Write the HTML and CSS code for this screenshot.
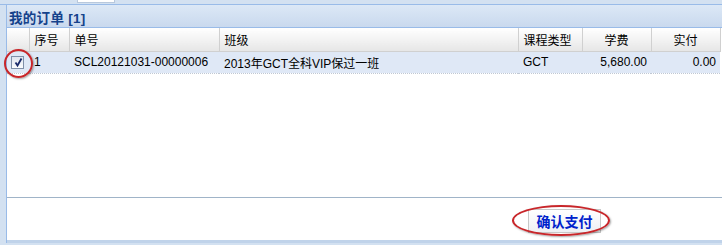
FILE: index.html
```html
<!doctype html>
<html lang="zh">
<head>
<meta charset="utf-8">
<title>我的订单</title>
<link rel="stylesheet" href="styles.css">
</head>
<body>
<div class="top"><span class="tab"></span></div>
<div class="panel">
	<div class="panel-title">我的订单 [1]</div>
	<div class="grid">
		<table class="grid-table">
			<thead>
				<tr>
					<th class="c-check"></th>
					<th class="c-no">序号</th>
					<th class="c-code">单号</th>
					<th class="c-class">班级</th>
					<th class="c-type">课程类型</th>
					<th class="c-fee num-h">学费</th>
					<th class="c-paid num-h">实付</th>
				</tr>
			</thead>
			<tbody>
				<tr class="sel">
					<td class="c-check"><span class="cb"><svg width="11" height="11" viewBox="0 0 11 11"><path d="M2.5 5.5 L4.5 8.5 L8.5 1.5" fill="none" stroke="#1a2a6a" stroke-width="1.8"/></svg></span><span class="ring ring-cb"></span></td>
					<td>1</td>
					<td>SCL20121031-00000006</td>
					<td>2013年GCT全科VIP保过一班</td>
					<td>GCT</td>
					<td class="num">5,680.00</td>
					<td class="num">0.00</td>
				</tr>
			</tbody>
		</table>
	</div>
	<div class="foot">
		<span class="btn-wrap"><button class="btn">确认支付</button><span class="ring ring-btn"></span></span>
	</div>
</div>
</body>
</html>
```
FILE: styles.css
```css
*{margin:0;padding:0;box-sizing:border-box;}
body{
	width:722px;
	height:245px;
	background:#d3e1f1;
	font:12px "Liberation Sans","Noto Sans CJK SC",sans-serif;
	color:#000;
	overflow:hidden;
}
.top{
	height:5px;
	border-bottom:1px solid #99bbe8;
	padding-left:77px;
}
.top .tab{
	display:block;
	width:38px;
	height:3px;
	background:#fff;
	border:1px solid #b8c8dc;
	border-top:0;
}
.panel{
	margin-left:6px;
	border-left:1px solid #99bbe8;
	height:238px;
	display:flex;
	flex-direction:column;
}
.panel-title{
	height:23px;
	padding:2px 0 0 2px;
	background:linear-gradient(#dce8f6,#c9d9ee);
	color:#15428b;
	font-weight:bold;
	font-size:13.5px;
	letter-spacing:0.3px;
	border-bottom:1px solid #99bbe8;
}
.grid{
	height:170px;
	background:#fff;
	border-bottom:1px solid #a0b4c8;
}
.grid-table{
	border-collapse:collapse;
	table-layout:fixed;
	width:713px;
}
.grid-table th{
	height:23px;
	font-weight:normal;
	text-align:left;
	padding:0 0 0 5px;
	background:linear-gradient(#ffffff,#f0f0f0 60%,#e6e6e6);
	border-right:1px solid #d0d0d0;
	border-bottom:1px solid #d0d0d0;
	white-space:nowrap;
}
.grid-table th.num-h{text-align:center;padding:0;}
.grid-table td{
	height:22px;
	padding:0 0 0 5px;
	white-space:nowrap;
	border-top:1px dotted #c0c8d4;
	border-bottom:1px dotted #c0c8d4;
}
.grid-table td.num{text-align:right;padding:0 4px 0 0;}
.sel td{background:#dfe8f6;}
.c-check{width:22px;}
.c-no{width:40px;}
.c-code{width:150px;}
.c-class{width:299px;}
.c-type{width:64px;}
.c-fee{width:69px;}
.c-paid{width:69px;}
.grid-table td.c-check{padding:0;position:relative;}
.cb{
	display:block;
	width:13px;
	height:13px;
	margin:0 0 0 4px;
	border:1px solid #7f8fa8;
	background:linear-gradient(#dfe4ee,#fbfcfe);
	padding:0 0 0 1px;
}
.cb svg{display:block;}
.ring{
	position:absolute;
	border:2px solid #c8262a;
	border-radius:50%;
	box-shadow:1px 1px 2px rgba(0,0,0,.35);
	pointer-events:none;
}
.ring-cb{
	left:-3px;
	top:-3px;
	width:29px;
	height:29px;
}
.foot{
	flex:1;
	background:#fff;
	border-bottom:3px solid #c0d3ea;
	display:flex;
	justify-content:flex-end;
	padding:11px 121px 0 0;
}
.btn-wrap{
	position:relative;
	display:block;
	height:24px;
}
.btn{
	display:block;
	width:73px;
	height:24px;
	border:1px solid #c8c8c8;
	background:linear-gradient(#ffffff,#eef0f4);
	color:#0022cc;
	font:bold 14px "Noto Sans CJK SC",sans-serif;
}
.ring-btn{
	left:-16px;
	top:-4px;
	width:98px;
	height:31px;
}
```
